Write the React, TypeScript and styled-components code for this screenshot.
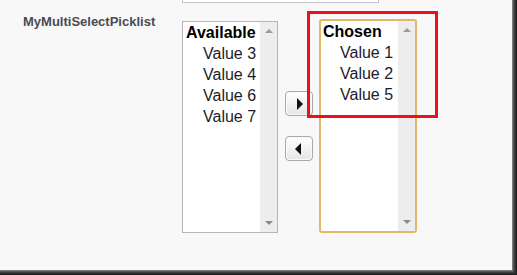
import React from "react";
import styled, { createGlobalStyle } from "styled-components";

const Global = createGlobalStyle`
  html, body { margin: 0; padding: 0; background: #f8f8f8; }
  body { font-family: "Liberation Sans", Arial, sans-serif; }
`;

const Screen = styled.div`
  position: relative;
  width: 517px;
  height: 275px;
  box-sizing: border-box;
  background: #f8f8f8;
  overflow: hidden;
  display: flex;
  align-items: flex-start;
  box-shadow: inset -1px -1px 0 #1e1e1e, inset -2px -2px 0 #2e2e2e,
    inset -3px -3px 0 #3e3e3e, inset -4px -4px 0 #555, inset -5px -5px 0 #7a7a7a;
`;

const LabelCell = styled.div`
  width: 159px;
  padding: 14px 0 0 23px;
  font-size: 13px;
  font-weight: bold;
  color: #4a4a56;
  line-height: 15px;
`;

const Picklist = styled.div`
  display: flex;
  flex-direction: column;
`;

const TopField = styled.div`
  width: 195px;
  height: 3px;
  margin-top: -1px;
  border: 1px solid #c4c4c8;
  border-top: none;
  background: #fff;
`;

const ListRow = styled.div`
  display: flex;
  align-items: flex-start;
  margin-top: 17px;
`;

const ListBox = styled.div<{ $focused?: boolean }>`
  display: flex;
  box-sizing: border-box;
  width: ${(p) => (p.$focused ? "98px" : "96px")};
  height: ${(p) => (p.$focused ? "214px" : "212px")};
  margin-top: ${(p) => (p.$focused ? "-1px" : "1px")};
  background: #fff;
  border: ${(p) => (p.$focused ? "2px solid #e2b76a" : "1px solid #b4b4bc")};
  border-radius: ${(p) => (p.$focused ? "3px" : "0")};
`;

const Items = styled.div<{ $focused?: boolean }>`
  flex: 1;
  padding-left: ${(p) => (p.$focused ? "2px" : "3px")};
  margin-top: ${(p) => (p.$focused ? "0" : "0")};
  font-size: 16px;
  line-height: 21px;
  color: #1c1c28;
`;

const Group = styled.div`
  font-weight: bold;
  color: #000;
`;

const Option = styled.div`
  padding-left: 17px;
`;

const Scrollbar = styled.div`
  width: 17px;
  background: #ededed;
  display: flex;
  flex-direction: column;
  justify-content: space-between;
  align-items: center;
  padding: 7px 0 7px;
  box-sizing: border-box;
`;

const Arrow = styled.span<{ $down?: boolean }>`
  width: 0;
  height: 0;
  border-left: 4px solid transparent;
  border-right: 4px solid transparent;
  ${(p) =>
    p.$down ? "border-top: 4px solid #8a8a8a;" : "border-bottom: 4px solid #9a9a9a;"}
`;

const Buttons = styled.div`
  display: flex;
  flex-direction: column;
  gap: 20px;
  margin: 71px 6px 0 7px;
`;

const MoveButton = styled.div`
  width: 28px;
  height: 25px;
  box-sizing: border-box;
  border: 1px solid #a9a9a9;
  border-radius: 4px;
  background: linear-gradient(#ffffff, #e6e6e6);
  box-shadow: inset 0 0 0 1px #fafafa;
  display: flex;
  align-items: center;
  justify-content: center;
`;

const Tri = styled.span<{ $left?: boolean }>`
  width: 0;
  height: 0;
  border-top: 6px solid transparent;
  border-bottom: 6px solid transparent;
  ${(p) =>
    p.$left
      ? "border-right: 6px solid #111; margin-right: 2px;"
      : "border-left: 6px solid #111; margin-left: 2px;"}
`;

const Highlight = styled.div`
  position: absolute;
  left: 307px;
  top: 11px;
  width: 131px;
  height: 107px;
  box-sizing: border-box;
  border: 3px solid #e8111c;
  pointer-events: none;
`;

const List = ({
  title,
  values,
  focused,
}: {
  title: string;
  values: string[];
  focused?: boolean;
}) => (
  <ListBox $focused={focused}>
    <Items $focused={focused}>
      <Group>{title}</Group>
      {values.map((v) => (
        <Option key={v}>{v}</Option>
      ))}
    </Items>
    <Scrollbar>
      <Arrow />
      <Arrow $down />
    </Scrollbar>
  </ListBox>
);

export default function App() {
  return (
    <>
      <Global />
      <Screen>
        <LabelCell>MyMultiSelectPicklist</LabelCell>
        <Picklist>
          <TopField />
          <ListRow>
            <List title="Available" values={["Value 3", "Value 4", "Value 6", "Value 7"]} />
            <Buttons>
              <MoveButton>
                <Tri />
              </MoveButton>
              <MoveButton>
                <Tri $left />
              </MoveButton>
            </Buttons>
            <List title="Chosen" values={["Value 1", "Value 2", "Value 5"]} focused />
          </ListRow>
        </Picklist>
        <Highlight />
      </Screen>
    </>
  );
}
